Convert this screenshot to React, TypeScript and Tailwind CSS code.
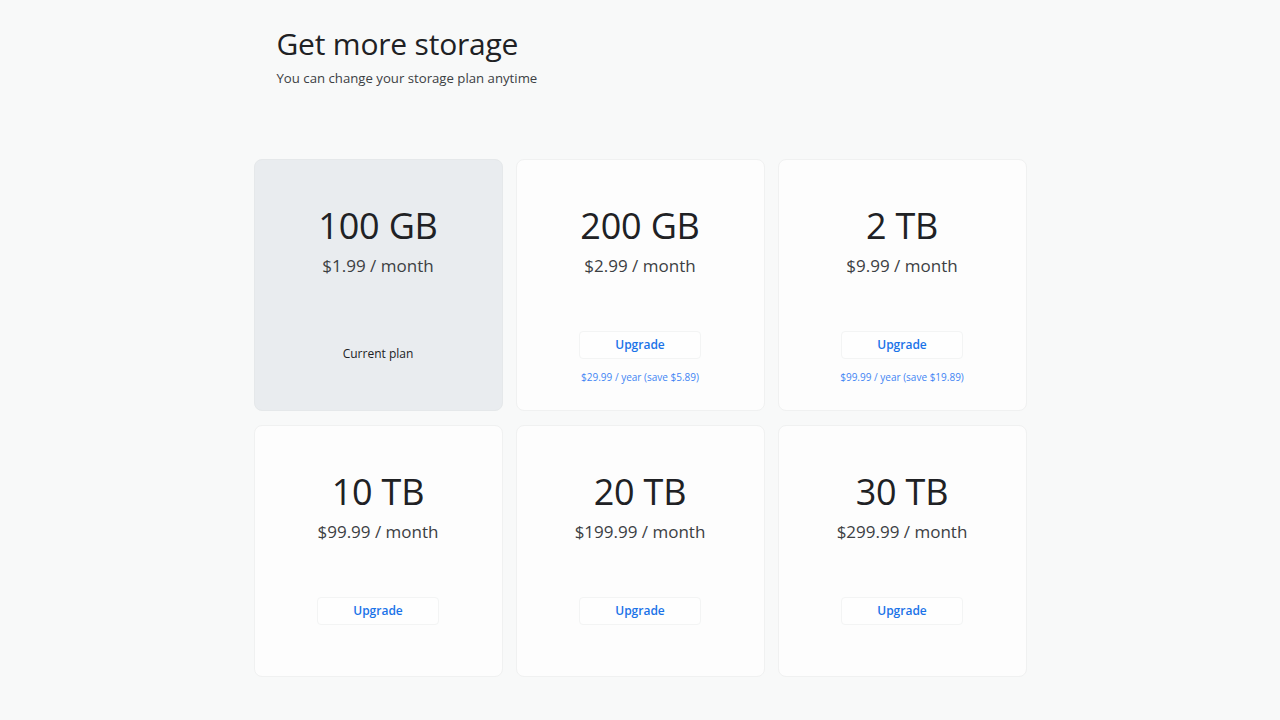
import React from "react";

interface Plan {
  size: string;
  price: string;
  current?: boolean;
  yearly?: string;
}

const plans: Plan[] = [
  { size: "100 GB", price: "$1.99 / month", current: true },
  { size: "200 GB", price: "$2.99 / month", yearly: "$29.99 / year (save $5.89)" },
  { size: "2 TB", price: "$9.99 / month", yearly: "$99.99 / year (save $19.89)" },
  { size: "10 TB", price: "$99.99 / month" },
  { size: "20 TB", price: "$199.99 / month" },
  { size: "30 TB", price: "$299.99 / month" },
];

function PlanCard({ plan }: { plan: Plan }) {
  const base = plan.current
    ? "bg-[#e9ecef] border-[#e5e8ea]"
    : "bg-[#fdfdfd] border-[#f0f1f1]";
  return (
    <div className={`h-[252px] rounded-[8px] border flex flex-col items-center pt-[44px] ${base}`}>
      <div className="text-[36px] leading-[44px] text-[#202124] tracking-[-0.2px]">{plan.size}</div>
      <div className="mt-[6px] text-[17px] leading-[24px] text-[#3c4043]">{plan.price}</div>
      {plan.current ? (
        <div className="mt-[68px] text-[12px] leading-[16px] font-medium text-[#202124]">Current plan</div>
      ) : (
        <>
          <button className="mt-[53px] w-[122px] h-[28px] rounded-[4px] border border-[#f3f4f4] bg-[#fefefe] text-[12px] font-semibold text-[#1a73e8]">
            Upgrade
          </button>
          {plan.yearly && (
            <div className="mt-[11px] text-[10px] leading-[14px] text-[#4285f4]">{plan.yearly}</div>
          )}
        </>
      )}
    </div>
  );
}

export default function App() {
  return (
    <div
      className="min-h-screen w-full bg-[#f8f9f9]"
      style={{ fontFamily: '"Open Sans", Roboto, sans-serif' }}
    >
      <div className="w-[773px] mx-auto pt-[24px]">
        <div className="pl-[23px]">
          <h1 className="text-[30px] leading-[40px] text-[#202124] tracking-[-0.2px]">Get more storage</h1>
          <p className="text-[13.2px] leading-[20px] text-[#3c4043] mt-[4px]">You can change your storage plan anytime</p>
        </div>
        <div className="mt-[71px] grid grid-cols-3 gap-x-[13px] gap-y-[14px]">
          {plans.map((p) => (
            <PlanCard key={p.size} plan={p} />
          ))}
        </div>
      </div>
    </div>
  );
}
